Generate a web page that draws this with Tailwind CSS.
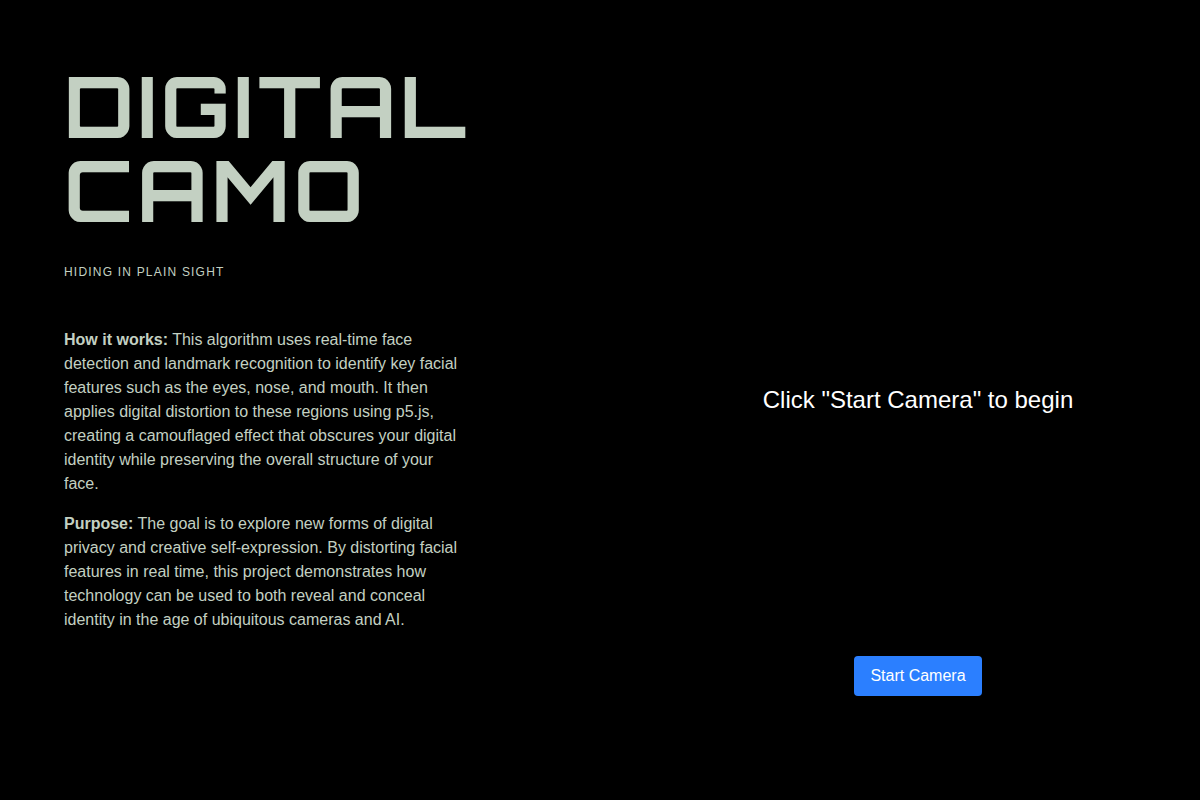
<!DOCTYPE html>
<html lang="en">
<head>
  <meta charset="UTF-8" />
  <meta name="viewport" content="width=device-width, initial-scale=1.0" />
  <title>Digital Camo</title>
  <script src="https://cdn.jsdelivr.net/npm/@tailwindcss/browser@4"></script>
</head>
<body class="bg-black text-[#c3d0c2] font-['Liberation_Sans',Arial,sans-serif]">
  <main class="min-h-screen grid grid-cols-[53%_47%]">
    <!-- Intro text -->
    <section class="pl-16 py-16">
      <h1 class="font-['Orbitron','DejaVu_Sans',sans-serif] font-bold text-[84px] leading-[84px] tracking-wider">DIGITAL<br>CAMO</h1>
      <p class="mt-8 text-xs tracking-widest uppercase">Hiding in plain sight</p>
      <div class="mt-12 max-w-[400px] space-y-4 text-base">
        <p><strong>How it works:</strong> This algorithm uses real-time face detection and landmark recognition to identify key facial features such as the eyes, nose, and mouth. It then applies digital distortion to these regions using p5.js, creating a camouflaged effect that obscures your digital identity while preserving the overall structure of your face.</p>
        <p><strong>Purpose:</strong> The goal is to explore new forms of digital privacy and creative self-expression. By distorting facial features in real time, this project demonstrates how technology can be used to both reveal and conceal identity in the age of ubiquitous cameras and AI.</p>
      </div>
    </section>

    <!-- Camera area -->
    <section class="grid grid-rows-[1fr_auto_1fr] justify-items-center">
      <p id="message" class="row-start-2 text-2xl text-white">Click "Start Camera" to begin</p>
      <button id="startCamera" type="button" class="row-start-3 self-end mb-26 bg-[#2b7fff] hover:bg-blue-600 text-white px-4 py-2 rounded cursor-pointer">Start Camera</button>
    </section>
  </main>

  <script>
    const message = document.getElementById("message");

    document.getElementById("startCamera").onclick = async () => {
      try {
        await navigator.mediaDevices.getUserMedia({ video: true });
        message.textContent = "Camera started";
      } catch (e) {
        message.textContent = "Camera not available";
      }
    };
  </script>
</body>
</html>
